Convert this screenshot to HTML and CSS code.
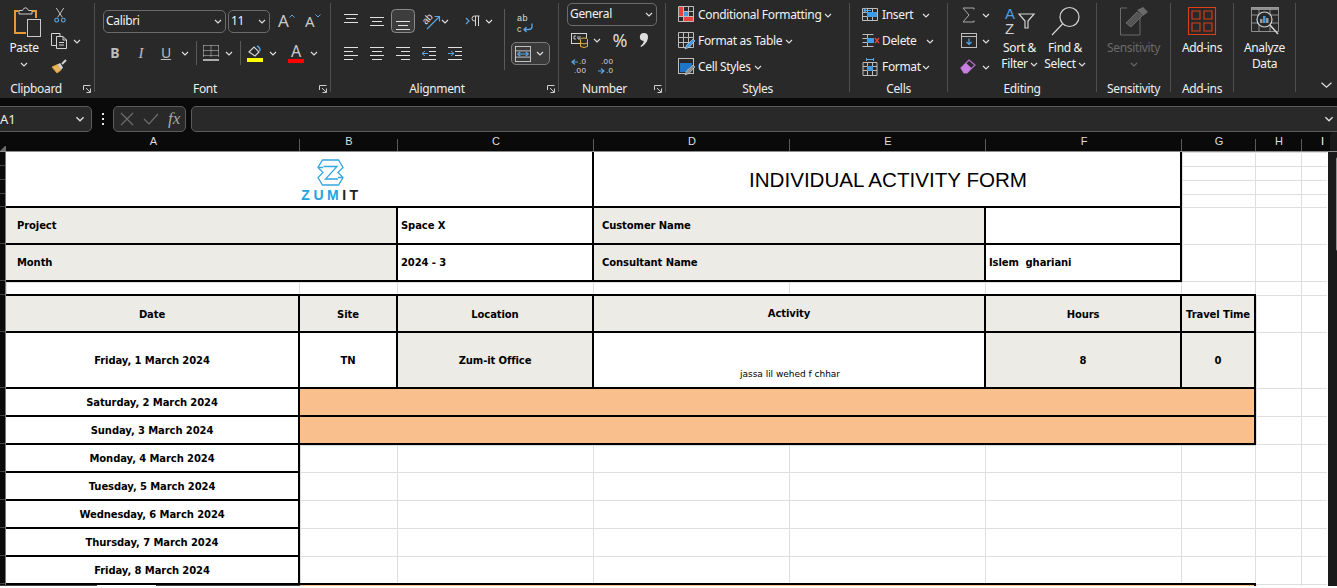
FILE: index.html
```html
<!DOCTYPE html>
<html lang="en">
<head>
<meta charset="utf-8">
<title>Individual Activity Form</title>
<link rel="stylesheet" href="styles.css">
</head>
<body>
<svg class="defs" aria-hidden="true"><defs>
  <symbol id="chev" viewBox="0 0 8 5"><path d="M1 1l3 3 3-3" fill="none" stroke="currentColor" stroke-width="1.1"/></symbol>
  <symbol id="launch" viewBox="0 0 8 8"><path d="M.5 5V.5H7.5M3 3l4 4M7.5 3.5v4h-4" fill="none" stroke="#cfcfcf" stroke-width="1"/></symbol>
</defs></svg>
<div class="app">
  <header class="ribbon">
    <section class="grp g1">
      <div class="body">
        <div class="paste">
          <svg class="i-paste" viewBox="0 0 28 30"><path d="M4.5 4H1v22h11M18 4h4v7" fill="none" stroke="#e69a35" stroke-width="2"/><path d="M5 7V3.500h3.500Q9.500 .8 11.500 .8T14.500 3.500H18V7Z" fill="#292929" stroke="#c9c9c9"/><rect x="13.500" y="12.500" width="13" height="17" fill="#292929" stroke="#c9c9c9"/></svg>
          <span class="paste-t">Paste</span>
          <svg class="chev paste-c"><use href="#chev"/></svg>
        </div>
        <div class="clip-tools">
          <div class="row"><svg class="m4 i16" viewBox="0 0 16 17"><path d="M4 1l6.500 10M12 1L5.500 11" stroke="#c9c9c9" fill="none"/><circle cx="4.500" cy="14" r="2" fill="none" stroke="#58a6e6" stroke-width="1.200"/><circle cx="11.500" cy="14" r="2" fill="none" stroke="#58a6e6" stroke-width="1.200"/></svg></div>
          <div class="row"><svg class="m3 i17" viewBox="0 0 17 16"><path d="M5 12.500H.5V.5H9V3" fill="none" stroke="#d4d4d4"/><path d="M5.500 3.500H12l3.500 3.500v8.500h-10ZM12 3.500V7h3.500M8 9.500h5M8 12h5" fill="#292929" stroke="#d4d4d4"/></svg><svg class="chev m5"><use href="#chev"/></svg></div>
          <div class="row"><svg class="m3 i17" viewBox="0 0 17 16"><path d="M1 8l5 6 4-3-3.500-5.500Z" fill="#eab45a" stroke="#d89a3c"/><path d="M6.500 5.500l3.500 5.500 2-2.500L9 4Z" fill="#d4d4d4"/><path d="M11 5l4-4" stroke="#d4d4d4" stroke-width="2"/></svg></div>
        </div>
      </div>
      <div class="label lab-clip"><span class="label-t">Clipboard</span><svg class="launch"><use href="#launch"/></svg></div>
    </section>
    <div class="sep"></div>

    <section class="grp g2">
      <div class="body col top3">
        <div class="row tall">
          <div class="combo m8 w123"><span>Calibri</span><svg class="chev"><use href="#chev"/></svg></div>
          <div class="combo m2 w42"><span>11</span><svg class="chev"><use href="#chev"/></svg></div>
          <div class="m8 growa"><span class="big-a">A</span><svg class="tiny" viewBox="0 0 6 4"><path d="M.5 3.500l2.500-2.500 2.500 2.500" fill="none" stroke="#58a6e6"/></svg></div>
          <div class="m11 growa"><span class="big-a small">A</span><svg class="tiny" viewBox="0 0 6 4"><path d="M.5.5L3 3 5.500.5" fill="none" stroke="#58a6e6"/></svg></div>
        </div>
        <div class="row tall">
          <span class="m8 slot24 fmt-b">B</span>
          <span class="m2 slot24 fmt-i">I</span>
          <span class="m1 slot24 fmt-u">U</span>
          <svg class="chev m3"><use href="#chev"/></svg>
          <span class="vsep m7"></span>
          <svg class="m6 i16" viewBox="0 0 16 16"><path d="M.5.500h15M.5 5.500h15M.5 10.500h15M.5.500v12M8 .500v12M15.500 .5v12" fill="none" stroke="#cfcfcf" stroke-dasharray="1 1"/><path d="M0 15h16" stroke="#e6e6e6" stroke-width="1.400"/></svg>
          <svg class="chev m6"><use href="#chev"/></svg>
          <span class="vsep m7"></span>
          <svg class="m6 i16 h17" viewBox="0 0 16 17"><path d="M2 7l5-5 5 5-4 4Z" fill="none" stroke="#d4d4d4" stroke-width="1.200"/><path d="M10 1q3 1 3 5" fill="none" stroke="#58a6e6" stroke-width="1.500"/><rect y="13" width="16" height="4" fill="#ffff00"/></svg>
          <svg class="chev m6"><use href="#chev"/></svg>
          <div class="fontcolor m11"><span>A</span><i></i></div>
          <svg class="chev m6"><use href="#chev"/></svg>
        </div>
      </div>
      <div class="label"><span class="label-t">Font</span><svg class="launch"><use href="#launch"/></svg></div>
    </section>
    <div class="sep"></div>

    <section class="grp g3">
      <div class="body">
        <div class="align-main col top3">
          <div class="row tall pad7">
            <svg class="a24" viewBox="0 0 24 24"><path d="M5 5.500h14M7 9.500h10M5 13.500h14" stroke="#e0e0e0"/></svg>
            <svg class="a24" viewBox="0 0 24 24"><path d="M5 8.500h14M7 12.500h10M5 16.500h14" stroke="#e0e0e0"/></svg>
            <svg class="a24 active" viewBox="0 0 24 24"><rect x=".5" y=".5" width="23" height="23" rx="4" fill="#3d3d3d" stroke="#8a8a8a"/><path d="M5 12.500h14M7 16.500h10M5 20.500h14" stroke="#e0e0e0"/></svg>
            <svg class="m5 i20" viewBox="0 0 20 20"><text class="svg-t ab" transform="rotate(-45 7 9)" x="2" y="11">ab</text><path d="M6 18L18 6M13.500 5.500H18.500V10.500" fill="none" stroke="#58a6e6" stroke-width="1.200"/></svg>
            <svg class="chev"><use href="#chev"/></svg>
            <svg class="m16 i16" viewBox="0 0 16 16"><path d="M1 5l3 3-3 3" fill="none" stroke="#58a6e6" stroke-width="1.200"/><path d="M10.500 3v10M13.500 3v10M14.500 3H9.500a2.500 2.500 0 0 0 0 5h1.500" fill="none" stroke="#d4d4d4"/></svg>
            <svg class="chev m4"><use href="#chev"/></svg>
          </div>
          <div class="row tall pad7">
            <svg class="a24" viewBox="0 0 24 24"><path d="M5 6.500h14M5 10.500h9M5 14.500h14M5 18.500h9" stroke="#e0e0e0"/></svg>
            <svg class="a24" viewBox="0 0 24 24"><path d="M5 6.500h14M7 10.500h10M5 14.500h14M7 18.500h10" stroke="#e0e0e0"/></svg>
            <svg class="a24" viewBox="0 0 24 24"><path d="M5 6.500h14M10 10.500h9M5 14.500h14M10 18.500h9" stroke="#e0e0e0"/></svg>
            <svg class="a24" viewBox="0 0 24 24"><path d="M5 6.500h14M12 10.500h7M12 14.500h7M5 18.500h14" stroke="#e0e0e0"/><path d="M11 12.500H5M8 10l-3 2.500L8 15" fill="none" stroke="#58a6e6"/></svg>
            <svg class="a24" viewBox="0 0 24 24"><path d="M5 6.500h14M12 10.500h7M12 14.500h7M5 18.500h14" stroke="#e0e0e0"/><path d="M5 12.500h6M8 10l3 2.500L8 15" fill="none" stroke="#58a6e6"/></svg>
          </div>
        </div>
        <span class="vsep tallsep"></span>
        <div class="align-side">
          <svg class="wrap-i" viewBox="0 0 18 18"><text class="svg-t wrapt" x="1" y="7">ab</text><text class="svg-t wrapt" x="1" y="17.500">c</text><path d="M16 9.500v3q0 3-3 3H8M10.500 13L8 15.500 10.500 18" fill="none" stroke="#58a6e6" stroke-width="1.300"/></svg>
          <div class="merge"><svg class="i16" viewBox="0 0 18 18"><rect x=".5" y=".5" width="17" height="17" fill="none" stroke="#cfcfcf"/><path d="M.5 5.500h17M.5 12.500h17" stroke="#cfcfcf"/><path d="M3 9h12M6 6.500L3 9l3 2.500M12 6.500L15 9l-3 2.500" fill="none" stroke="#58a6e6" stroke-width="1.200"/></svg><svg class="chev"><use href="#chev"/></svg></div>
        </div>
      </div>
      <div class="label"><span class="label-t">Alignment</span><svg class="launch"><use href="#launch"/></svg></div>
    </section>
    <div class="sep"></div>

    <section class="grp g4">
      <div class="body col up1">
        <div class="row"><div class="combo m8 w90"><span>General</span><svg class="chev"><use href="#chev"/></svg></div></div>
        <div class="row">
          <svg class="m12 i18" viewBox="0 0 18 18"><rect x=".5" y="2.500" width="15" height="10" fill="none" stroke="#d4d4d4"/><path d="M3 5h2M3 8h2M3 5v3M7 5v3h2v-3" fill="none" stroke="#d4d4d4" stroke-width=".9"/><ellipse cx="13" cy="8.500" rx="3.500" ry="1.500" fill="#292929" stroke="#e8b04a"/><path d="M9.500 8.500v7q3.500 2 7 0v-7M9.500 12q3.500 2 7 0" fill="#292929" stroke="#e8b04a"/></svg>
          <svg class="chev m4"><use href="#chev"/></svg>
          <span class="m7 slot24 pct">%</span>
          <svg class="m6 comma" viewBox="0 0 12 16"><path d="M6 1a4 4 0 0 1 4 4c0 4-3 8-7 10l-.5-1c2-1.500 3-3 3.200-5A4 4 0 0 1 6 1Z" fill="#dcdcdc"/></svg>
        </div>
        <div class="row">
          <svg class="m12 i18" viewBox="0 0 18 18"><text class="svg-t dec" x="8" y="7">.0</text><text class="svg-t dec" x="3" y="16">.00</text><path d="M7 5H1M4 2.500L1 5l3 2.500" fill="none" stroke="#58a6e6" stroke-width="1.200"/></svg>
          <svg class="m8 i18" viewBox="0 0 18 18"><text class="svg-t dec" x="4" y="7">.00</text><text class="svg-t dec" x="9" y="16">.0</text><path d="M1 14h6M4 11.500L7 14l-3 2.500" fill="none" stroke="#58a6e6" stroke-width="1.200"/></svg>
        </div>
      </div>
      <div class="label"><span class="label-t">Number</span><svg class="launch"><use href="#launch"/></svg></div>
    </section>
    <div class="sep"></div>

    <section class="grp g5">
      <div class="body col">
        <div class="row"><svg class="m12 i18" viewBox="0 0 18 18"><path d="M.5.500h15v15H.5ZM.5 5.500h15M.5 10.500h15M5.500.500v15M10.500 .5v15" fill="none" stroke="#bdbdbd"/><rect x="1" y="1" width="4" height="9" fill="#e8433a"/><rect x="6" y="6" width="4" height="4" fill="#3e9be4"/><rect x="6" y="11" width="9" height="4" fill="#e8433a"/></svg><span class="m2 txt">Conditional Formatting</span><svg class="chev m3"><use href="#chev"/></svg></div>
        <div class="row"><svg class="m12 i18" viewBox="0 0 18 18"><path d="M.5.500h15v15H.5ZM.5 5.500h15M.5 10.500h15M5.500.500v15M10.500 .5v15" fill="none" stroke="#bdbdbd"/><path d="M7 17q1-5 5-7l3-3 2 2-3 3q-2 4-7 5Z" fill="#3e9be4" stroke="#dcdcdc" stroke-width=".6"/></svg><span class="m2 txt">Format as Table</span><svg class="chev m3"><use href="#chev"/></svg></div>
        <div class="row"><svg class="m12 i18" viewBox="0 0 18 18"><rect x=".5" y=".5" width="15" height="15" fill="none" stroke="#bdbdbd"/><path d="M2 5h12v3l-5 6H2Z" fill="#1f76c9"/><path d="M7 17q1-5 5-7l3-3 2 2-3 3q-2 4-7 5Z" fill="#8a8a8a" stroke="#dcdcdc" stroke-width=".6"/></svg><span class="m2 txt">Cell Styles</span><svg class="chev m3"><use href="#chev"/></svg></div>
      </div>
      <div class="label only"><span class="label-t">Styles</span></div>
    </section>
    <div class="sep"></div>

    <section class="grp g6">
      <div class="body col">
        <div class="row"><svg class="m12 i18" viewBox="0 0 18 18"><path d="M.5 2.500h15v12H.5ZM.5 6.500h15M.5 10.500h15M5.500 2.500v12M10.500 2.500v12" fill="none" stroke="#bdbdbd"/><rect x="5" y="6" width="10" height="5" fill="#3e9be4"/><path d="M9 4.500H2M4.500 2L2 4.500 4.500 7" fill="none" stroke="#58a6e6" stroke-width="1.200"/></svg><span class="m2 cell-t w40 txt">Insert</span><svg class="chev"><use href="#chev"/></svg></div>
        <div class="row"><svg class="m12 i18" viewBox="0 0 18 18"><path d="M.5 2.500h11M.5 14.500h11M5.500 2.500v12M.5 6.500h5M.5 10.500h5" fill="none" stroke="#bdbdbd"/><rect x="5" y="6" width="7" height="5" fill="#3e9be4"/><path d="M13 6l4 5M17 6l-4 5" stroke="#e8433a" stroke-width="1.300"/></svg><span class="m2 cell-t w44 txt">Delete</span><svg class="chev"><use href="#chev"/></svg></div>
        <div class="row"><svg class="m12 i18" viewBox="0 0 18 18"><path d="M1 4.500h14v13H1ZM1 8.500h14M1 12.500h14M5.500 4.500v13M10.500 4.500v13" fill="none" stroke="#bdbdbd"/><rect x="5" y="8" width="6" height="5" fill="#3e9be4"/><path d="M4 1.500h8M4.500 0v3M11.500 0v3" stroke="#58a6e6"/></svg><span class="m2 cell-t w40 txt">Format</span><svg class="chev"><use href="#chev"/></svg></div>
      </div>
      <div class="label only"><span class="label-t">Cells</span></div>
    </section>
    <div class="sep"></div>

    <section class="grp g7">
      <div class="body">
        <div class="col edit-tools">
          <div class="row"><svg class="m13 i16" viewBox="0 0 16 16"><path d="M13 2.500V1H2l6 7-6 7h11v-1.500" fill="none" stroke="#a9a9a9"/></svg><svg class="chev m5"><use href="#chev"/></svg></div>
          <div class="row"><svg class="m13 i16" viewBox="0 0 16 16"><rect x=".5" y=".5" width="15" height="14" fill="none" stroke="#bdbdbd"/><path d="M.5 3.500h15" stroke="#bdbdbd"/><path d="M8 5.500v6M5.500 9L8 11.500 10.500 9" fill="none" stroke="#58a6e6" stroke-width="1.200"/></svg><svg class="chev m5"><use href="#chev"/></svg></div>
          <div class="row"><svg class="m12 i16" viewBox="0 0 16 16"><path d="M1 9l8-8 6 5-8 8H4Z" fill="none" stroke="#b96fd3" stroke-width="1.200"/><path d="M1 9l5-5 5.500 5L7 14H4Z" fill="#c77fe0"/></svg><svg class="chev m6"><use href="#chev"/></svg></div>
        </div>
        <div class="bigcol w41">
          <svg class="bigicon w30" viewBox="0 0 30 28"><text class="az-a" x="0" y="12">A</text><text class="az-z" x="0" y="27">Z</text><path d="M14 7h15l-6 7v7h-3v-7Z" fill="none" stroke="#d4d4d4" stroke-width="1.200"/></svg>
          <span class="txt line">Sort &amp;</span>
          <span class="txt line">Filter<svg class="chev m2"><use href="#chev"/></svg></span>
        </div>
        <div class="bigcol w42 m4">
          <svg class="bigicon w30" viewBox="0 0 30 28"><circle cx="19.500" cy="10" r="9.500" fill="none" stroke="#d4d4d4" stroke-width="1.200"/><path d="M12.500 17L2 28" stroke="#d4d4d4" stroke-width="1.200"/></svg>
          <span class="txt line">Find &amp;</span>
          <span class="txt line">Select<svg class="chev m2"><use href="#chev"/></svg></span>
        </div>
      </div>
      <div class="label only"><span class="label-t">Editing</span></div>
    </section>
    <div class="sep"></div>

    <section class="grp g8">
      <div class="body">
        <div class="bigcol fill dim">
          <svg class="bigicon w28" viewBox="0 0 28 28"><path d="M20 9v19H.5V1H7" fill="none" stroke="#6a6a6a"/><path d="M6 16L17 5l5 4-11 11Z" fill="#555" stroke="#6a6a6a"/><path d="M17 3l6-3 5 5-5 4Z" fill="#6a6a6a"/></svg>
          <span class="txt line">Sensitivity</span>
          <span class="line"><svg class="chev"><use href="#chev"/></svg></span>
        </div>
      </div>
      <div class="label only"><span class="label-t">Sensitivity</span></div>
    </section>
    <div class="sep"></div>

    <section class="grp g9">
      <div class="body">
        <div class="bigcol fill">
          <svg class="bigicon w28" viewBox="0 0 28 28"><path d="M.5.500h27v27H.5ZM4 4h8v8H4ZM16 4h8v8h-8ZM4 16h8v8H4ZM16 16h8v8h-8Z" fill="none" stroke="#dc3e15" stroke-width="1.100"/></svg>
          <span class="txt line">Add-ins</span>
        </div>
      </div>
      <div class="label only"><span class="label-t">Add-ins</span></div>
    </section>
    <div class="sep"></div>

    <section class="grp g10">
      <div class="body">
        <div class="bigcol fill">
          <svg class="bigicon w28" viewBox="0 0 28 28"><rect y="0" width="28" height="3" fill="#8f8f8f"/><path d="M.5.500h27v24H.5ZM.5 8h27M.5 16h27M8 0v25M19 0v25" fill="none" stroke="#9a9a9a" stroke-width=".9"/><circle cx="13.500" cy="12.500" r="7.500" fill="#292929" stroke="#d4d4d4" stroke-width="1.200"/><rect x="9" y="12" width="2.500" height="4" fill="#9a9a9a"/><rect x="12" y="9" width="2.500" height="7" fill="#3e9be4"/><rect x="15" y="11" width="2.500" height="5" fill="#9a9a9a"/><path d="M19 18l8 9" stroke="#d4d4d4" stroke-width="1.500"/></svg>
          <span class="txt line">Analyze</span>
          <span class="txt line">Data</span>
        </div>
      </div>
    </section>
    <div class="sep"></div>

    <section class="grp g11"><svg class="collapse" viewBox="0 0 10 5"><path d="M.5.500L5 4.500 9.500.5" fill="none" stroke="#e0e0e0" stroke-width="1.100"/></svg></section>
  </header>

  <div class="formula">
    <div class="fbox namebox"><span>A1</span><svg class="chev w10"><use href="#chev"/></svg></div>
    <div class="dots"><i></i><i></i><i></i></div>
    <div class="fbox fxbox">
      <svg class="i14" viewBox="0 0 14 14"><path d="M1 1l12 12M13 1L1 13" stroke="#6d6d6d" stroke-width="1.200"/></svg>
      <svg class="i14 mark" viewBox="0 0 16 14"><path d="M1 7l5 5L15 2" fill="none" stroke="#6d6d6d" stroke-width="1.200"/></svg>
      <span class="fx">fx</span>
    </div>
    <div class="fbox input"><svg class="chev w10"><use href="#chev"/></svg></div>
  </div>

  <div class="colheads">
    <div class="corner"></div>
    <span>A</span><span>B</span><span>C</span><span>D</span><span>E</span><span>F</span><span>G</span><span>H</span><span class="last">I</span>
    <div class="sb-top"></div>
  </div>

  <div class="sheetwrap">
    <div class="rowheads">
      <i class="h14"></i><i class="h14"></i><i class="h14"></i><i class="h13"></i><i class="h37"></i><i class="h37"></i><i class="h14"></i><i class="h37"></i><i class="h56"></i><i class="h28"></i><i class="h28"></i><i class="h28"></i><i class="h28"></i><i class="h28"></i><i class="h28"></i><i class="h28"></i>
    </div>
    <table class="sheet">
      <colgroup><col class="ca"><col class="cb"><col class="cc"><col class="cd"><col class="ce"><col class="cf"><col class="cg"><col class="ch"><col class="ci"></colgroup>
      <tbody>
        <tr class="h14">
          <td class="b top left logo-cell" colspan="3" rowspan="4">
            <div class="logo">
              <svg class="logo-i" viewBox="0 0 27 27"><path d="M5.500 1h16L26 8.500 21 13.500 26 18.500 21.500 26h-16L1 18.500 6 13.500 1 8.500Z" fill="none" stroke="#35a7e0" stroke-width="1.300"/><path d="M6.500 7.500h13.500L8.500 20H21M1.500 8.500H6M21 18.500h4.500" fill="none" stroke="#35a7e0" stroke-width="1.300"/></svg>
              <span class="logo-t"><b>ZUM</b>IT</span>
            </div>
          </td>
          <td class="b top title" colspan="3" rowspan="4">INDIVIDUAL ACTIVITY FORM</td>
          <td></td><td></td><td></td>
        </tr>
        <tr class="h14"><td></td><td></td><td></td></tr>
        <tr class="h14"><td></td><td></td><td></td></tr>
        <tr class="h13"><td></td><td></td><td></td></tr>
        <tr class="h37">
          <td class="b left gray lbl" colspan="2">Project</td>
          <td class="b val">Space X</td>
          <td class="b gray lbl2" colspan="2">Customer Name</td>
          <td class="b"></td>
          <td></td><td></td><td></td>
        </tr>
        <tr class="h37">
          <td class="b left gray lbl" colspan="2">Month</td>
          <td class="b val">2024 - 3</td>
          <td class="b gray lbl2" colspan="2">Consultant Name</td>
          <td class="b val">Islem&nbsp; ghariani</td>
          <td></td><td></td><td></td>
        </tr>
        <tr class="h14"><td></td><td></td><td></td><td></td><td></td><td></td><td></td><td></td><td></td></tr>
        <tr class="h37">
          <td class="b left gray c">Date</td>
          <td class="b gray c">Site</td>
          <td class="b gray c">Location</td>
          <td class="b gray c up" colspan="2">Activity</td>
          <td class="b gray c">Hours</td>
          <td class="b gray c">Travel Time</td>
          <td></td><td></td>
        </tr>
        <tr class="h56">
          <td class="b left c">Friday, 1 March 2024</td>
          <td class="b c">TN</td>
          <td class="b gray c">Zum-it Office</td>
          <td class="b c note" colspan="2">jassa lil wehed f chhar</td>
          <td class="b gray c">8</td>
          <td class="b gray c">0</td>
          <td></td><td></td>
        </tr>
        <tr class="h28"><td class="b left c">Saturday, 2 March 2024</td><td class="b off" colspan="6"></td><td></td><td></td></tr>
        <tr class="h28"><td class="b left c">Sunday, 3 March 2024</td><td class="b off" colspan="6"></td><td></td><td></td></tr>
        <tr class="h28"><td class="b left c">Monday, 4 March 2024</td><td></td><td></td><td></td><td></td><td></td><td></td><td></td><td></td></tr>
        <tr class="h28"><td class="b left c">Tuesday, 5 March 2024</td><td></td><td></td><td></td><td></td><td></td><td></td><td></td><td></td></tr>
        <tr class="h28"><td class="b left c">Wednesday, 6 March 2024</td><td></td><td></td><td></td><td></td><td></td><td></td><td></td><td></td></tr>
        <tr class="h28"><td class="b left c">Thursday, 7 March 2024</td><td></td><td></td><td></td><td></td><td></td><td></td><td></td><td></td></tr>
        <tr class="h28"><td class="b left c">Friday, 8 March 2024</td><td></td><td></td><td></td><td></td><td></td><td></td><td></td><td></td></tr>
        <tr class="h28"><td class="b left c"></td><td class="b off" colspan="6"></td><td></td><td></td></tr>
      </tbody>
    </table>
    <div class="scroll"><div class="thumb"></div></div>
    <div class="tabs"><i></i><b></b><i></i></div>
  </div>
</div>
</body>
</html>
```
FILE: styles.css
```css
*{box-sizing:border-box}
html,body{margin:0;padding:0;background:#fff;overflow:hidden}
body{width:1337px;height:588px;font-family:"Noto Sans","Open Sans",sans-serif;color:#f2f2f2}
.defs{width:0;height:0;display:block}
.app{width:1337px;height:586px;overflow:hidden;background:#0a0a0a}

/* ribbon */
.ribbon{height:98px;background:#292929;display:flex;font-size:12px;letter-spacing:-.33px;line-height:16px}
.grp{display:flex;flex-direction:column;height:98px;padding-top:2px;flex:none}
.sep{width:1px;flex:none;background:#4f4f4f;margin:3px 0 6px}
.g1{width:94px}.g2{width:235px}.g3{width:227px}.g4{width:106px}.g5{width:183px}
.g6{width:97px}.g7{width:148px}.g8{width:73px}.g9{width:62px}.g10{width:61px}.g11{width:41px}
.body{height:76px;display:flex}
.col{flex-direction:column}
.top3{padding-top:3px}
.up1{margin-top:-1px;margin-bottom:1px}
.label{height:20px;display:flex;align-items:center;padding:1px 3px 0 0;color:#efefef}
.label-t{flex:1;text-align:center;margin-right:4px}
.lab-clip .label-t{margin-right:11px}
.label.only{padding:1px 0 0}
.label.only .label-t{margin:0}
.launch{width:8px;height:8px;flex:none}
.row{height:26px;display:flex;align-items:center;flex:none}
.row.tall{height:32px}
.pad7{padding-left:7px}
.txt{white-space:nowrap}
svg{flex:none;display:block;overflow:visible}
.chev{width:8px;height:5px;color:#e2e2e2}
.chev.w10{width:10px;height:6px}
.i14{width:14px;height:14px}.i16{width:16px;height:16px}.h17{height:17px}.i17{width:17px;height:16px}
.i18{width:18px;height:18px}.i20{width:20px;height:20px}
.a24{width:24px;height:24px;margin:0 1px}
.m1{margin-left:1px}.m2{margin-left:2px}.m3{margin-left:3px}.m4{margin-left:4px}.m5{margin-left:5px}.m6{margin-left:6px}.m7{margin-left:7px}.m8{margin-left:8px}
.m11{margin-left:11px}.m12{margin-left:12px}.m13{margin-left:13px}.m16{margin-left:16px}
.svg-t{font:8.500px "Liberation Sans",sans-serif;fill:#dcdcdc}
.svg-t.ab{font-size:10px}
.svg-t.wrapt{font-size:9px;letter-spacing:.6px}
.svg-t.dec{font-size:8px;letter-spacing:.4px}
.paste{width:48px;display:flex;flex-direction:column;align-items:center}
.i-paste{width:28px;height:30px;margin:5px 0 0 7px}
.paste-t{margin-top:3px}
.paste-c{margin-top:6px}
.clip-tools{display:flex;flex-direction:column}
.combo{height:23px;border:1px solid #6b6b6b;border-radius:5px;display:flex;align-items:center;justify-content:space-between;padding:0 3px 0 2px;font-size:12px}
.w123{width:123px}.w42{width:42px}.w90{width:90px}
.growa{width:16px;display:flex;align-items:flex-start;color:#c9c9c9}
.big-a{font-size:17px;line-height:20px;letter-spacing:0}
.big-a.small{font-size:15px}
.tiny{width:6px;height:4px;margin-top:3px}
.slot24{width:24px;text-align:center;font-size:14px;color:#bdbdbd;letter-spacing:0}
.fmt-b{font-weight:700}
.fmt-i{font-style:italic;font-family:"Liberation Serif",serif;font-size:15px}
.fmt-u{text-decoration:underline}
.vsep{width:1px;height:24px;background:#5a5a5a;flex:none}
.fontcolor{width:16px;display:flex;flex-direction:column;align-items:center;color:#c9c9c9;font-size:16px;line-height:16px;letter-spacing:0}
.fontcolor i{width:16px;height:4px;background:#ff0000;display:block}
.align-main{width:173px}
.tallsep{height:61px;margin-top:7px}
.align-side{display:flex;flex-direction:column;margin-left:6px}
.wrap-i{width:18px;height:18px;margin:12px 0 0 5px}
.merge{width:39px;height:23px;margin-top:10px;border:1px solid #7c7c7c;border-radius:5px;background:#3a3a3a;display:flex;align-items:center;justify-content:space-between;padding:0 5px 0 3px}
.pct{font-size:18px;color:#dcdcdc}
.comma{width:12px;height:16px}
.w40{width:40px}.w44{width:44px}
.edit-tools{width:51px}
.bigcol{display:flex;flex-direction:column;align-items:center;padding-top:5px}
.bigcol.fill{width:100%}
.w41{width:41px}.w42.bigcol{width:42px}
.bigicon{height:28px;margin-bottom:5px}
.w30{width:30px}.w28{width:28px}
.line{height:16px;display:flex;align-items:center;white-space:nowrap}
.dim{color:#6a6a6a}
.dim .chev{color:#6a6a6a}
.az-a{font:15px "Liberation Sans",sans-serif;fill:#4a9fe6}
.az-z{font:15px "Liberation Sans",sans-serif;fill:#d4d4d4}
.g11{align-items:flex-end}
.collapse{width:11px;height:6px;margin:80px 5px 0 0}

/* formula bar */
.formula{height:26px;margin-top:8px;display:flex;color:#eee}
.fbox{height:26px;background:#292929;border:1px solid #5c5c5c;border-radius:5px;display:flex;align-items:center;flex:none}
.namebox{width:98px;margin-left:-6px;justify-content:space-between;padding:0 6px 0 5px;font-size:13px}
.dots{width:21px;flex:none;display:flex;flex-direction:column;align-items:center;justify-content:center;gap:3px}
.dots i{display:block;width:2px;height:2px;background:#e6e6e6}
.fxbox{width:73px;padding-left:6px}
.mark{width:16px;margin-left:9px}
.fx{font:italic 17px "Liberation Serif",serif;color:#a8a8a8;margin-left:9px}
.input{width:1150px;margin-left:5px;justify-content:flex-end;padding-right:6px}

/* column headers */
.colheads{height:20px;display:grid;grid-template-columns:6px 293px 98px 196px 196px 196px 196px 74px 46px 26px 10px;font:11px/19px "Liberation Sans",sans-serif;color:#dedede;border-bottom:1px solid #8d8d8d}
.colheads span{text-align:center;position:relative;padding-left:2px}
.colheads span::after{content:"";position:absolute;right:-1px;top:7px;bottom:0;width:1px;background:#5a5a5a}
.colheads .last{text-align:right;padding-right:3px;color:#fff}
.colheads .last::after{display:none}
.corner{border-bottom:5px solid #6a6a6a;border-left:5px solid transparent;height:5px;margin-top:14px}
.sb-top{margin-left:3px;background:#1a1a1a;border-radius:4px 0 0 0}

/* sheet */
.sheetwrap{height:434px;display:flex;position:relative;overflow:hidden;background:#fff}
.rowheads{width:6px;flex:none;background:#0a0a0a;border-right:1px solid #777;display:flex;flex-direction:column}
.rowheads i{display:block;flex:none;border-bottom:1px solid #444}
.rowheads .h14{height:14px}.rowheads .h13{height:13px}.rowheads .h37{height:37px}.rowheads .h56{height:56px}.rowheads .h28{height:28px}
.sheet{border-collapse:collapse;table-layout:fixed;width:1321px;flex:none;font:bold 10px "DejaVu Sans",sans-serif;letter-spacing:-.1px;color:#000;align-self:flex-start}
.ca{width:293px}.cb{width:98px}.cc{width:196px}.cd{width:196px}.ce{width:196px}.cf{width:196px}.cg{width:74px}.ch{width:46px}.ci{width:26px}
.sheet td{padding:0;overflow:hidden;white-space:nowrap;border:0;background:linear-gradient(#dedede,#dedede) left top/1px 100% no-repeat,linear-gradient(#dedede,#dedede) left top/100% 1px no-repeat}
.sheet tr.h14{height:14px}.sheet tr.h13{height:13px}.sheet tr.h37{height:37px}.sheet tr.h56{height:56px}.sheet tr.h28{height:28px}
.sheet td.b{border:2px solid #000;background:none}
.sheet td.top{border-top:0}
.sheet td.left{border-left:0}
.sheet td.gray{background:#ecebe6}
.sheet td.off{background:#f9c08e}
.c{text-align:center}
.sheet tr.h37 td.c{padding-top:2px}
.sheet tr.h37 td.up{padding-top:0}
.sheet td.lbl{padding-left:11px}
.sheet td.lbl2{padding-left:8px}
.sheet td.val{padding-left:3px}
.sheet td.note{font:9px "DejaVu Sans",sans-serif;letter-spacing:-.02px;vertical-align:bottom;padding:0 0 8px 2px}
.sheet td.title{text-align:center;font:20.600px "Liberation Sans",sans-serif;letter-spacing:0;padding:2px 0 0 2px}
.logo{display:flex;flex-direction:column;align-items:center;padding:0 0 0 62px}
.logo-i{width:27px;height:27px;margin-top:2px}
.logo-t{font:700 14px/14px "Liberation Sans",sans-serif;letter-spacing:3.500px;color:#222;margin:2px -3px 0 0}
.logo-t b{color:#21a4e0}
.scroll{width:11px;flex:none;background:#1a1a1a;padding:5px 0 0 8px}
.thumb{width:3px;height:94px;background:#8f8f8f;border-radius:2px 0 0 2px}
.tabs{position:absolute;left:0;bottom:0;height:1px;display:flex}
.tabs i{display:block;height:1px;background:#444}
.tabs i:first-child{width:97px}
.tabs b{display:block;width:59px;height:1px;background:#fff}
.tabs i:last-child{width:144px}
```
